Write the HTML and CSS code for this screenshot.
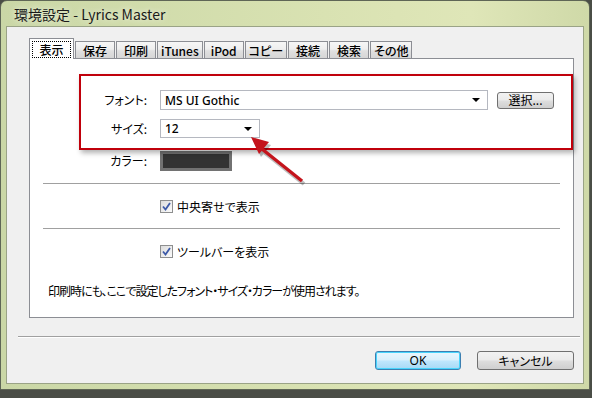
FILE: index.html
```html
<!DOCTYPE html>
<html lang="ja">
<head>
<meta charset="utf-8">
<title>環境設定 - Lyrics Master</title>
<link rel="stylesheet" href="styles.css">
</head>
<body>
<div class="window">
  <div class="titlebar"><span class="title">環境設定 - Lyrics Master</span></div>
  <div class="client">
    <div class="tabs">
      <div class="tab active"><span class="focus">表示</span></div>
      <div class="tab">保存</div>
      <div class="tab">印刷</div>
      <div class="tab">iTunes</div>
      <div class="tab">iPod</div>
      <div class="tab">コピー</div>
      <div class="tab">接続</div>
      <div class="tab">検索</div>
      <div class="tab">その他</div>
    </div>
    <div class="panel">
      <div class="form">
        <div class="label">フォント:</div>
        <div class="field">
          <div class="combo combo-font"><span>MS UI Gothic</span><span class="arrow"></span></div>
          <button class="btn btn-select">選択...</button>
        </div>
        <div class="label">サイズ:</div>
        <div class="field">
          <div class="combo combo-size"><span>12</span><span class="arrow"></span></div>
        </div>
        <div class="label row-color">カラー:</div>
        <div class="field row-color">
          <div class="swatch"></div>
        </div>
      </div>
      <div class="sep sep-first"></div>
      <div class="check-row">
        <span class="checkbox"><svg width="9" height="9" viewBox="0 0 9 9"><path d="M1 4.5 L3.5 7.5 L8 1" fill="none" stroke="#3d5aa8" stroke-width="1.8"/></svg></span>
        <span>中央寄せで表示</span>
      </div>
      <div class="sep"></div>
      <div class="check-row">
        <span class="checkbox"><svg width="9" height="9" viewBox="0 0 9 9"><path d="M1 4.5 L3.5 7.5 L8 1" fill="none" stroke="#3d5aa8" stroke-width="1.8"/></svg></span>
        <span>ツールバーを表示</span>
      </div>
      <p class="note">印刷時にも、ここで設定したフォント・サイズ・カラーが使用されます。</p>
      <div class="highlight"></div>
    </div>
    <div class="bottom-sep"></div>
    <div class="buttons">
      <button class="btn btn-default">OK</button>
      <button class="btn btn-cancel">キャンセル</button>
    </div>
  </div>
</div>
<svg class="pointer" width="80" height="70" viewBox="240 125 80 70">
  <g transform="translate(2,3)" opacity="0.25">
    <line x1="302" y1="181" x2="262" y2="149" stroke="#000" stroke-width="4"/>
    <polygon points="251,137 269,142 259,154" fill="#000"/>
  </g>
  <line x1="302" y1="181" x2="262" y2="149" stroke="#c4141c" stroke-width="3.5"/>
  <polygon points="251,137 269,142 259,154" fill="#c4141c"/>
</svg>
</body>
</html>
```
FILE: styles.css
```css
* { box-sizing: border-box; }

body {
  margin: 0;
  width: 592px;
  height: 398px;
  overflow: hidden;
  position: relative;
  background: #4a4d46;
  font-family: "Noto Sans CJK JP", "Noto Sans", sans-serif;
  font-size: 12px;
  color: #000;
}

.window {
  width: 590px;
  height: 390px;
  display: flex;
  flex-direction: column;
  padding: 0 6px 6px 6px;
  border: 1px solid #5f6656;
  border-radius: 7px 7px 0 0;
  background: linear-gradient(to right, #cad7a6 0%, #d9e2b2 55%, #dfe6b8 80%, #cfd9a8 100%);
}

.titlebar {
  height: 26px;
  flex: none;
  padding-left: 7px;
  display: flex;
  align-items: center;
}

.title {
  font-family: "Noto Sans CJK JP", sans-serif;
  font-size: 14px;
  color: #1a1a1a;
  text-shadow: 0 0 6px rgba(255,255,255,0.8);
}

.client {
  flex: 1;
  background: #f0f0f0;
  box-shadow: 0 0 0 1px #9aa386;
  padding: 11px 9px 0 22px;
  display: flex;
  flex-direction: column;
}

.tabs {
  display: flex;
  align-items: flex-end;
  height: 20px;
  gap: 1px;
  position: relative;
  z-index: 1;
  flex: none;
}

.tab {
  height: 17px;
  min-width: 40px;
  padding: 1px 3px 0 3px;
  text-align: center;
  border: 1px solid #8c8e94;
  border-bottom: none;
  background: linear-gradient(#f6f6f6, #eeeeee 45%, #e0e0e0 55%, #d6d6d6);
  font-size: 12px;
  font-weight: 500;
  line-height: 16px;
  font-feature-settings: "palt";
  white-space: nowrap;
}

.tab.active {
  height: 21px;
  min-width: 45px;
  margin-bottom: -1px;
  padding: 2px 2px 0 2px;
  background: #fff;
}

.focus {
  display: block;
  border: 1px dotted #000;
  height: 17px;
  line-height: 16px;
  padding: 0 5px;
}

.panel {
  position: relative;
  width: 545px;
  height: 260px;
  background: #fff;
  border: 1px solid #8c8e94;
  flex: none;
}

.form {
  display: grid;
  grid-template-columns: 117px 1fr;
  grid-template-rows: 20px 19px 20px;
  column-gap: 13px;
  row-gap: 9px;
  padding-top: 31px;
  align-items: center;
}

.label {
  text-align: right;
  font-feature-settings: "palt";
  line-height: 16px;
}

.row-color { margin-top: 8px; }

.field {
  display: flex;
  align-items: center;
  gap: 9px;
}

.combo {
  height: 20px;
  border: 1px solid #b5b8c0;
  background: #fff;
  display: flex;
  align-items: center;
  justify-content: space-between;
  padding: 0 4px 0 4px;
  font-family: "Noto Sans", sans-serif;
  font-size: 12px;
  font-weight: 500;
}

.combo-font { width: 328px; }
.combo-size { width: 100px; height: 19px; }

.arrow {
  width: 0;
  height: 0;
  border-left: 4px solid transparent;
  border-right: 4px solid transparent;
  border-top: 4px solid #000;
  margin-right: 3px;
}

.btn {
  font-family: "Noto Sans CJK JP", sans-serif;
  font-size: 12px;
  color: #000;
  border: 1px solid #707070;
  border-radius: 3px;
  background: linear-gradient(#f2f2f2, #ebebeb 45%, #dddddd 55%, #cfcfcf);
  padding: 0;
  line-height: 1;
}

.btn-select {
  width: 57px;
  height: 17px;
  font-feature-settings: "palt";
}

.swatch {
  width: 72px;
  height: 20px;
  background: #333;
  border: 3px solid #727272;
}

.sep {
  margin: 0 13px;
  border-top: 1px solid #a0a0a0;
}

.sep-first { margin-top: 16px; }

.check-row {
  height: 44px;
  display: flex;
  align-items: center;
  padding-left: 130px;
  gap: 4px;
  font-feature-settings: "palt";
}

.checkbox {
  width: 13px;
  height: 13px;
  border: 1px solid #8e8f8f;
  background: linear-gradient(135deg, #dcdcdc, #fbfbfb);
  display: flex;
  align-items: center;
  justify-content: center;
}

.note {
  margin: 9px 0 0 18px;
  font-feature-settings: "palt";
  letter-spacing: -1px;
}

.highlight {
  position: absolute;
  left: 49px;
  top: 15px;
  width: 494px;
  height: 76px;
  border: 2px solid #c0000b;
  box-shadow: 2px 3px 5px rgba(0,0,0,0.3);
  pointer-events: none;
}

.bottom-sep {
  margin: 18px -6px 0 -11px;
  border-top: 1px solid #a0a0a0;
  border-bottom: 1px solid #fff;
  flex: none;
}

.buttons {
  display: flex;
  justify-content: flex-end;
  gap: 16px;
  margin-top: 13px;
}

.btn-default {
  width: 86px;
  height: 19px;
  border-color: #3c7fb1;
  background: linear-gradient(#eaf6fd, #d9f0fc 45%, #bee6fd 55%, #a7d9f5);
  box-shadow: inset 0 0 0 1px #48d4fc;
  font-family: "Noto Sans", sans-serif;
}

.btn-cancel {
  width: 97px;
  height: 19px;
  font-feature-settings: "palt";
}

.pointer {
  position: absolute;
  left: 240px;
  top: 125px;
}
```
